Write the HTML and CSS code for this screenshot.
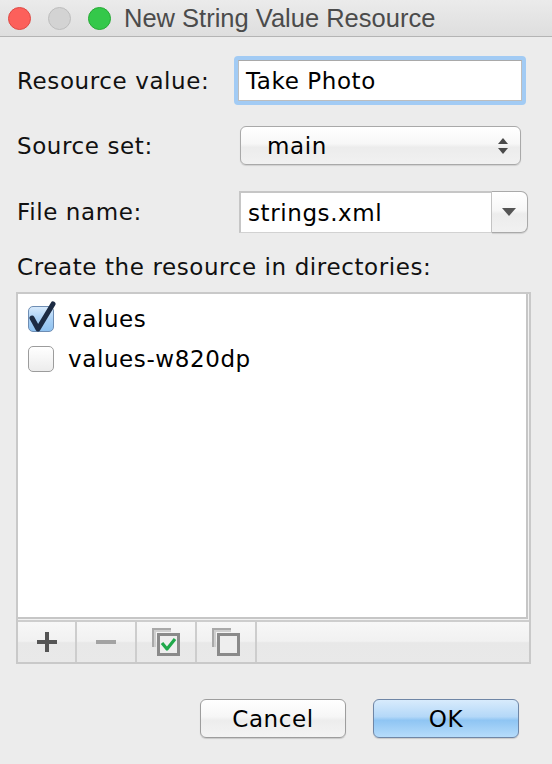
FILE: index.html
```html
<!DOCTYPE html>
<html>
<head>
<meta charset="utf-8">
<link rel="stylesheet" href="styles.css">
</head>
<body>
<div class="window">
  <div class="titlebar">
    <span class="light red"></span>
    <span class="light gray"></span>
    <span class="light green"></span>
    <span class="title">New String Value Resource</span>
  </div>
  <div class="content">
    <div class="row row-value">
      <label class="label">Resource value:</label>
      <div class="textfield-ring">
        <div class="textfield">Take Photo</div>
      </div>
    </div>
    <div class="row row-source">
      <label class="label">Source set:</label>
      <div class="select">
        <span class="select-text">main</span>
        <svg class="updown" width="12" height="18" viewBox="0 0 12 18">
          <path d="M6 1 L11 7 L1 7 Z" fill="#4a4a4a"/>
          <path d="M1 11 L11 11 L6 17 Z" fill="#4a4a4a"/>
        </svg>
      </div>
    </div>
    <div class="row row-file">
      <label class="label">File name:</label>
      <div class="combo">
        <div class="combo-field">strings.xml</div>
        <div class="combo-btn">
          <svg width="14" height="10" viewBox="0 0 14 10"><path d="M0 1 L14 1 L7 9 Z" fill="#555"/></svg>
        </div>
      </div>
    </div>
    <div class="dir-label">Create the resource in directories:</div>
    <div class="panel">
      <div class="list">
        <div class="item">
          <span class="cb cb-on">
            <svg class="tick" width="30" height="34" viewBox="0 0 30 34">
              <path d="M5 17 L11 28 L26 3" fill="none" stroke="#1c2b43" stroke-width="5" stroke-linecap="round" stroke-linejoin="round"/>
            </svg>
          </span>
          <span class="item-text">values</span>
        </div>
        <div class="item">
          <span class="cb"></span>
          <span class="item-text">values-w820dp</span>
        </div>
      </div>
      <div class="toolbar">
        <div class="tb-btn">
          <svg width="22" height="22" viewBox="0 0 22 22"><rect x="9" y="1" width="4" height="20" fill="#555"/><rect x="1" y="9" width="20" height="4" fill="#555"/></svg>
        </div>
        <div class="tb-btn">
          <svg width="22" height="22" viewBox="0 0 22 22"><rect x="1" y="9" width="20" height="4" fill="#a3a3a3"/></svg>
        </div>
        <div class="tb-btn">
          <svg width="30" height="30" viewBox="0 0 30 30">
            <path d="M2 20 V2 H20" fill="none" stroke="#a9a9a9" stroke-width="2"/>
            <path d="M4 20 V4 H20" fill="none" stroke="#cfcfcf" stroke-width="2"/>
            <rect x="7.5" y="7.5" width="20" height="20" fill="#eeeeee" stroke="#8a8a8a" stroke-width="3"/>
            <path d="M11 16 L16 22 L24 12" fill="none" stroke="#1fa84a" stroke-width="3.2" stroke-linejoin="round"/>
          </svg>
        </div>
        <div class="tb-btn">
          <svg width="30" height="30" viewBox="0 0 30 30">
            <path d="M2 20 V2 H20" fill="none" stroke="#a9a9a9" stroke-width="2"/>
            <path d="M4 20 V4 H20" fill="none" stroke="#cfcfcf" stroke-width="2"/>
            <rect x="7.5" y="7.5" width="20" height="20" fill="#eeeeee" stroke="#8a8a8a" stroke-width="3"/>
          </svg>
        </div>
        <div class="tb-rest"></div>
      </div>
    </div>
    <div class="footer">
      <button class="btn">Cancel</button>
      <button class="btn btn-ok">OK</button>
    </div>
  </div>
</div>
</body>
</html>
```

FILE: styles.css
```css
html, body {
  margin: 0;
  padding: 0;
  background: #ececec;
}
.window {
  width: 552px;
  height: 764px;
  background: #ececec;
  font-family: "DejaVu Sans", "Liberation Sans", sans-serif;
  font-size: 23px;
  letter-spacing: 0.6px;
  color: #111;
  overflow: hidden;
}
.titlebar {
  height: 36px;
  border-bottom: 1px solid #b4b4b4;
  background: linear-gradient(#ebebeb, #dedede);
  display: flex;
  align-items: center;
  padding-left: 8px;
  box-sizing: content-box;
}
.light {
  width: 23px;
  height: 23px;
  border-radius: 50%;
  box-sizing: border-box;
  margin-right: 17px;
}
.light.red { background: #fc605b; border: 1px solid #de4a45; }
.light.gray { background: #d3d3d3; border: 1px solid #bdbdbd; }
.light.green { background: #34c84a; border: 1px solid #27aa35; margin-right: 13px; }
.title {
  font-family: "Liberation Sans", Arial, sans-serif;
  font-size: 25.5px;
  letter-spacing: 0;
  color: #4b4b4b;
}
.content {
  padding: 0 21px 0 17px;
}
.row {
  display: flex;
  align-items: center;
}
.label {
  width: 217px;
  flex: none;
}
.row-value { margin-top: 19px; height: 49px; }
.textfield-ring {
  width: 292px;
  height: 49px;
  box-sizing: border-box;
  border: 4px solid #a2cbf4;
  border-radius: 4px;
}
.textfield {
  height: 100%;
  box-sizing: border-box;
  border: 1px solid #bdbdbd;
  border-top-color: #a9a9a9;
  background: #fff;
  padding-left: 7px;
  display: flex;
  align-items: center;
  color: #000;
}
.row-source { margin-top: 21px; height: 39px; }
.select {
  margin-left: 6px;
  width: 281px;
  height: 39px;
  box-sizing: border-box;
  border: 1px solid #a9a9a9;
  border-radius: 6px;
  background: linear-gradient(#ffffff 0%, #f7f7f7 45%, #ececec 55%, #f1f1f1 100%);
  box-shadow: 0 1px 1px rgba(0,0,0,0.12);
  display: flex;
  align-items: center;
  justify-content: space-between;
  padding: 0 11px 0 26px;
  color: #000;
}
.updown { display: block; }
.row-file { margin-top: 26px; height: 42px; }
.combo {
  margin-left: 5px;
  width: 289px;
  height: 42px;
  display: flex;
}
.combo-field {
  flex: 1;
  box-sizing: border-box;
  border: 2px solid #c6c6c6;
  border-right: 1px solid #c6c6c6;
  border-bottom: 1px solid #d2d2d2;
  background: #fff;
  padding-left: 7px;
  display: flex;
  align-items: center;
  color: #000;
}
.combo-btn {
  width: 36px;
  box-sizing: border-box;
  border: 1px solid #a9a9a9;
  border-left: none;
  border-radius: 0 7px 7px 0;
  background: linear-gradient(#ffffff 0%, #f7f7f7 45%, #ececec 55%, #f1f1f1 100%);
  box-shadow: 0 1px 1px rgba(0,0,0,0.12);
  display: flex;
  align-items: center;
  justify-content: center;
  padding-right: 2px;
}
.dir-label {
  margin-top: 20px;
  height: 28px;
  line-height: 28px;
}
.panel {
  margin-top: 11px;
  margin-left: -1px;
  width: 515px;
  height: 372px;
  box-sizing: border-box;
  border: 2px solid #c9c9c9;
  display: flex;
  flex-direction: column;
  background: #f2f2f2;
}
.list {
  height: 325px;
  box-sizing: border-box;
  background: #fff;
  border-right: 2px solid #c6c6c6;
  border-bottom: 2px solid #c6c6c6;
  margin-right: 1px;
  padding: 12px 0 0 10px;
}
.item {
  display: flex;
  align-items: center;
  height: 26px;
  margin-bottom: 14px;
}
.cb {
  position: relative;
  width: 26px;
  height: 26px;
  box-sizing: border-box;
  border: 1px solid #9c9c9c;
  border-radius: 5px;
  background: linear-gradient(#ffffff, #ececec);
  flex: none;
  margin-right: 14px;
}
.cb-on {
  border-color: #6e8db3;
  background: linear-gradient(#d6e9fb 0%, #a9d0f5 50%, #8fc2f0 100%);
}
.tick {
  position: absolute;
  left: -2px;
  top: -6px;
}
.item-text { color: #000; }
.toolbar {
  margin-top: 1px;
  flex: 1;
  border-top: 2px solid #cdcdcd;
  display: flex;
  background: linear-gradient(#f7f7f7 0%, #f1f1f1 48%, #e8e8e8 52%, #e9e9e9 100%);
}
.tb-btn {
  width: 58px;
  border-right: 2px solid #cdcdcd;
  display: flex;
  align-items: center;
  justify-content: center;
}
.tb-btn:first-child { width: 57px; }
.tb-btn svg { display: block; }
.tb-rest { flex: 1; }
.footer {
  margin-top: 35px;
  display: flex;
  justify-content: flex-end;
  gap: 27px;
  padding-right: 12px;
}
.btn {
  width: 146px;
  height: 39px;
  box-sizing: border-box;
  border: 1px solid #9d9d9d;
  border-radius: 6px;
  background: linear-gradient(#ffffff 0%, #f6f6f6 45%, #ededed 55%, #f3f3f3 100%);
  box-shadow: 0 1px 1px rgba(0,0,0,0.15);
  font-family: "DejaVu Sans", "Liberation Sans", sans-serif;
  font-size: 23px;
  letter-spacing: 0.6px;
  color: #000;
  padding: 0;
}
.btn-ok {
  border-color: #6f86a6;
  background: linear-gradient(#d8ebfc 0%, #b4d8f8 45%, #8fc5f3 55%, #b6dcfb 100%);
}
```
